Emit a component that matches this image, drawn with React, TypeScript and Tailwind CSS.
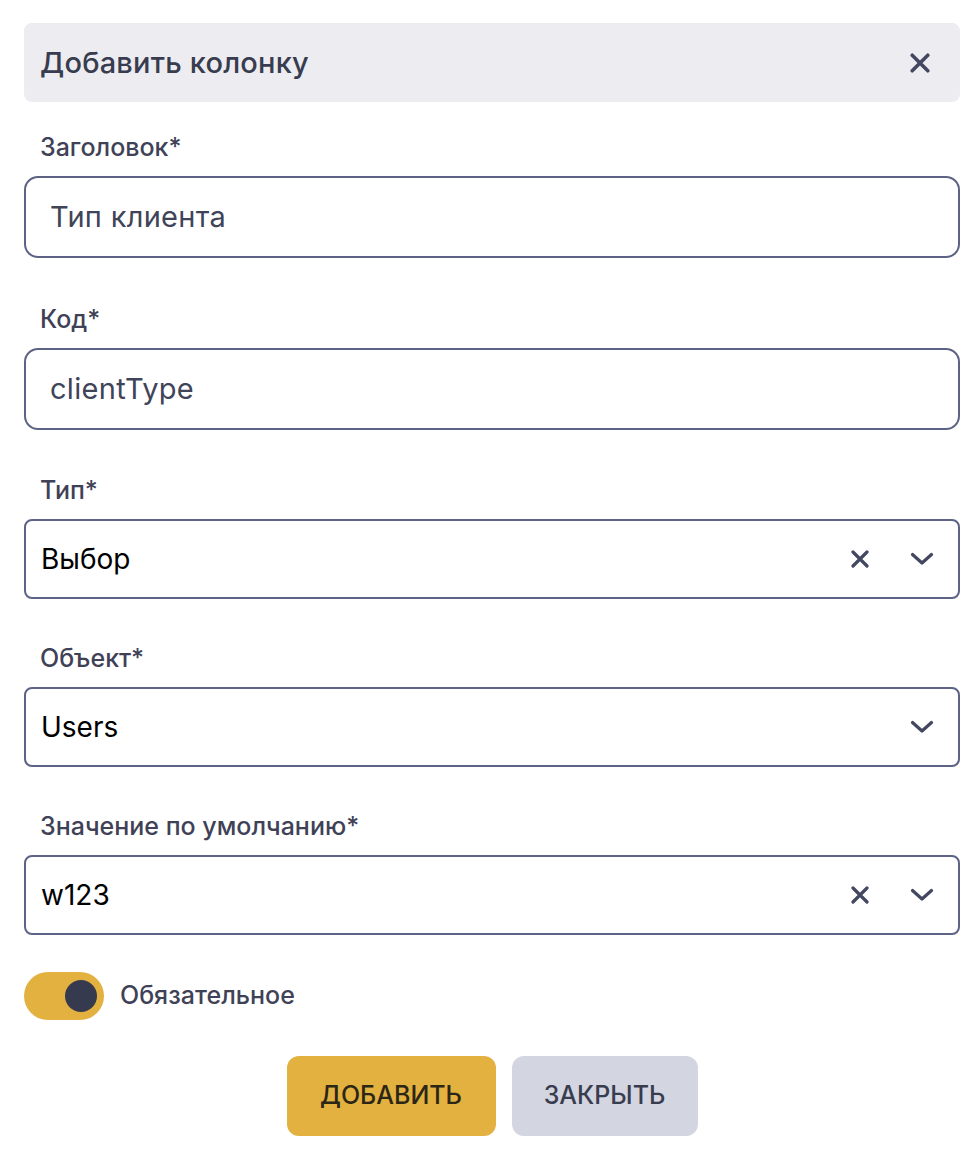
import { ReactNode } from "react";

const font = { fontFamily: "Inter, 'Noto Sans', sans-serif" };

const Cross = ({ size = 18 }: { size?: number }) => (
  <svg width={size} height={size} viewBox="0 0 18 18" fill="none">
    <path d="M2 2L16 16M16 2L2 16" stroke="#434860" strokeWidth="3.2" strokeLinecap="round" />
  </svg>
);

const Chevron = () => (
  <svg width="24" height="14" viewBox="0 0 24 14" fill="none">
    <path d="M2.5 2.5L12 11L21.5 2.5" stroke="#434860" strokeWidth="3.2" strokeLinecap="round" strokeLinejoin="round" />
  </svg>
);

const Label = ({ children, className = "" }: { children: ReactNode; className?: string }) => (
  <div className={`h-[28px] pl-4 text-[25px] leading-[28px] font-medium text-[#3f4257] ${className}`}>{children}</div>
);

const TextField = ({ value }: { value: string }) => (
  <div className="mt-[15px] flex h-[82px] items-center rounded-[14px] border-2 border-[#5c6385] px-[24px] text-[29px] tracking-[0.3px] text-[#404459]">
    {value}
  </div>
);

const SelectField = ({ value, clearable }: { value: string; clearable?: boolean }) => (
  <div className="mt-[15px] flex h-[80px] items-center rounded-[8px] border-2 border-[#5c6385] pl-[15px] pr-[24px] text-[28px] text-black">
    <span className="flex-1">{value}</span>
    {clearable && (
      <span className="mr-[41px] flex">
        <Cross />
      </span>
    )}
    <Chevron />
  </div>
);

export default function App() {
  return (
    <div className="min-h-[1174px] w-[976px] bg-white pl-6 pr-4 pt-[23px]" style={font}>
      <div className="flex h-[79px] items-center justify-between rounded-[8px] bg-[#ececf1] pl-4 pr-[30px]">
        <h2 className="text-[29px] font-medium tracking-[0.2px] text-[#383c4f]">Добавить колонку</h2>
        <Cross size={20} />
      </div>

      <Label className="mt-[31px]">Заголовок*</Label>
      <TextField value="Тип клиента" />

      <Label className="mt-[47px]">Код*</Label>
      <TextField value="clientType" />

      <Label className="mt-[46px]">Тип*</Label>
      <SelectField value="Выбор" clearable />

      <Label className="mt-[45px]">Объект*</Label>
      <SelectField value="Users" />

      <Label className="mt-[45px]">Значение по умолчанию*</Label>
      <SelectField value="w123" clearable />

      <div className="mt-[37px] flex items-center gap-4">
        <div className="flex h-[48px] w-[80px] items-center justify-end rounded-full bg-[#e3b140] pr-[7px]">
          <div className="h-[32px] w-[32px] rounded-full bg-[#353a4f]" />
        </div>
        <span className="text-[25px] font-medium text-[#3f4257]">Обязательное</span>
      </div>

      <div className="mt-[36px] flex justify-center gap-4">
        <button className="h-[80px] w-[209px] rounded-[12px] bg-[#e3b140] text-[25px] font-medium text-[#2b2616]">
          ДОБАВИТЬ
        </button>
        <button className="h-[80px] w-[186px] rounded-[12px] bg-[#d3d5e0] text-[25px] font-medium text-[#383c4f]">
          ЗАКРЫТЬ
        </button>
      </div>
    </div>
  );
}
